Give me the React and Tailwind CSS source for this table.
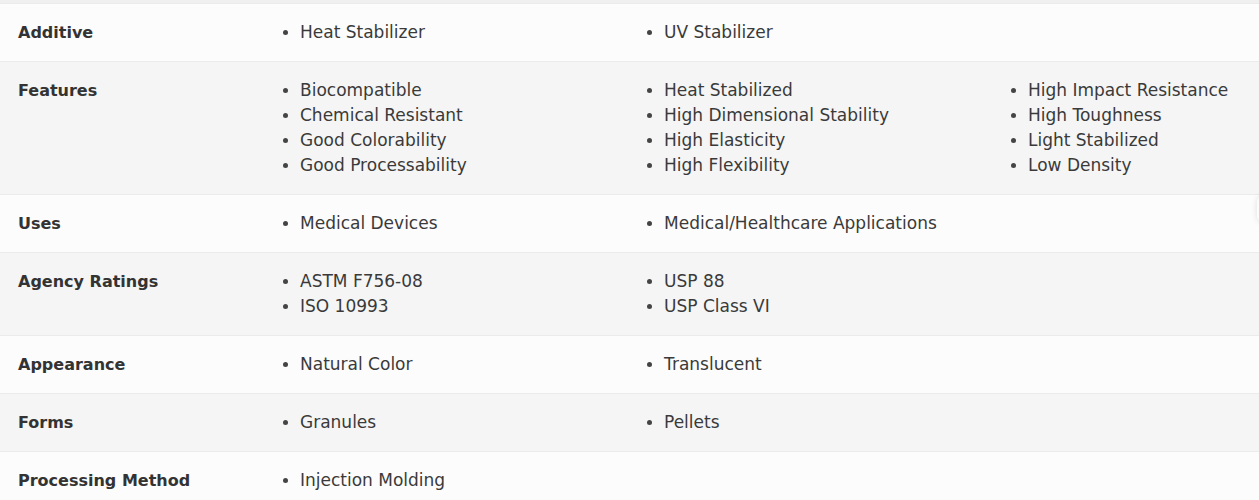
const ROWS = [
  { label: "Additive", cols: [["Heat Stabilizer"], ["UV Stabilizer"]] },
  {
    label: "Features",
    cols: [
      ["Biocompatible", "Chemical Resistant", "Good Colorability", "Good Processability"],
      ["Heat Stabilized", "High Dimensional Stability", "High Elasticity", "High Flexibility"],
      ["High Impact Resistance", "High Toughness", "Light Stabilized", "Low Density"],
    ],
  },
  { label: "Uses", cols: [["Medical Devices"], ["Medical/Healthcare Applications"]] },
  { label: "Agency Ratings", cols: [["ASTM F756-08", "ISO 10993"], ["USP 88", "USP Class VI"]] },
  { label: "Appearance", cols: [["Natural Color"], ["Translucent"]] },
  { label: "Forms", cols: [["Granules"], ["Pellets"]] },
  { label: "Processing Method", cols: [["Injection Molding"]] },
];

function Row({ row, shaded }) {
  return (
    <div className={`flex border-b border-[#ebebeb] py-4 ${shaded ? "bg-[#f5f5f5]" : "bg-[#fcfcfc]"}`}>
      <div className="w-[283px] shrink-0 pl-[18px] text-[16px] leading-[25px] font-bold text-[#333]">
        {row.label}
      </div>
      {row.cols.map((items, i) => (
        <ul key={i} className="w-[364px] shrink-0">
          {items.map((item) => (
            <li key={item} className="flex items-center text-[17px] leading-[25px] text-[#3a3a3a]">
              <span className="w-[5px] h-[5px] rounded-full bg-[#444] mr-[12px]" />
              {item}
            </li>
          ))}
        </ul>
      ))}
    </div>
  );
}

export default function App() {
  return (
    <div className="relative w-[1259px] h-[500px] overflow-hidden bg-[#f0f0f0] pt-[3px]" style={{ fontFamily: '"DejaVu Sans", sans-serif' }}>
      <div className="border-t border-[#ebebeb]">
        {ROWS.map((row, i) => (
          <Row key={row.label} row={row} shaded={i % 2 === 1} />
        ))}
      </div>
      {/* clipped floating tab at the right edge */}
      <div className="absolute left-[1257px] top-[196px] w-[24px] h-[26px] rounded-md bg-[#fcfcfc] shadow-[0_0_6px_rgba(0,0,0,0.12)]" />
    </div>
  );
}
